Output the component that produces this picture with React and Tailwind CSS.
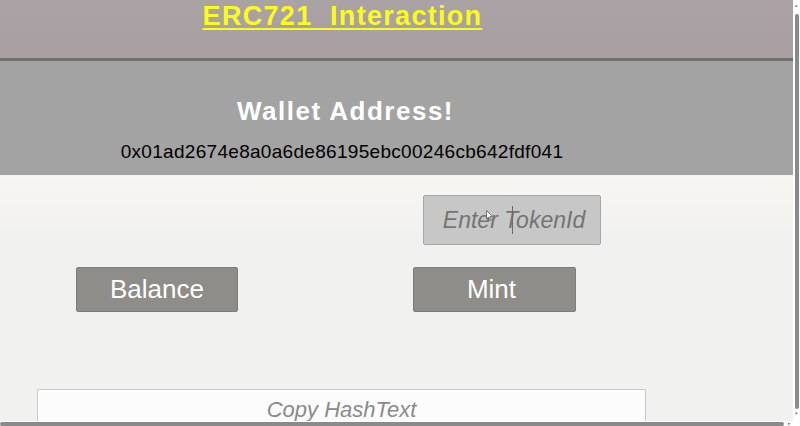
import React from "react";

const App = () => {
  return (
    <div className="relative flex h-[426px] w-[800px] overflow-hidden bg-[#f2f2f0] font-['Liberation_Sans',Arial,sans-serif]">
      <div className="flex w-[793px] flex-col">
        {/* title bar */}
        <header className="h-[58px] shrink-0 bg-gradient-to-b from-[#aaa2a4] to-[#a89fa1]">
          <div className="w-[685px] pt-[1px] text-center leading-[30px]">
            <span className="text-[27px] font-bold tracking-[1.3px] text-[#fbfb1e] underline decoration-[2px] underline-offset-[3px]">
              ERC721&nbsp;&nbsp;Interaction
            </span>
          </div>
        </header>
        <div className="h-[3px] shrink-0 bg-[#726e6e]" />

        {/* wallet */}
        <section className="flex h-[114px] shrink-0 flex-col bg-[#a4a3a3]">
          <div className="w-[691px] pt-[36px] text-center text-[26px] font-bold leading-[28px] tracking-[1.5px] text-white">
            Wallet Address!
          </div>
          <div className="w-[684px] pt-[16px] text-center text-[19px] leading-[22px] tracking-[0.3px] text-black">
            0x01ad2674e8a0a6de86195ebc00246cb642fdf041
          </div>
        </section>

        {/* actions */}
        <main className="flex min-h-0 flex-1 flex-col overflow-hidden bg-gradient-to-b from-[#f7f6f3] to-[#f1f1ef] to-[60px]">
          <div className="flex shrink-0 pl-[423px] pt-[20px]">
            <div className="relative flex h-[50px] w-[178px] items-center justify-center rounded-[2px] border border-[#a9a8a8] bg-[#c8c7c7] pl-[4px]">
              <span className="text-[23px] italic text-[#757474]">Enter TokenId</span>
              <span className="absolute left-[88px] top-[10px] h-[28px] w-px bg-[#6a6a6a]" />
              <svg className="absolute left-[62px] top-[14px]" width="7" height="11" viewBox="0 0 7 11">
                <path d="M0.5 0.5 L0.5 9 L2.5 7 L4 10.5 L5.3 10 L3.8 6.6 L6.5 6.6 Z" fill="#ffffff" stroke="#555" strokeWidth="0.8" />
              </svg>
            </div>
          </div>
          <div className="flex shrink-0 gap-[175px] pl-[76px] pt-[22px]">
            <button className="h-[45px] w-[162px] rounded-[2px] border border-[#7d7c79] bg-[#8e8d89] text-[26px] text-white">
              Balance
            </button>
            <button className="h-[45px] w-[163px] rounded-[2px] border border-[#7d7c79] bg-[#8e8d89] pr-[6px] text-[26px] text-white">
              Mint
            </button>
          </div>
          <div className="shrink-0 pl-[37px] pt-[77px]">
            <div className="flex h-[40px] w-[609px] justify-center rounded-t-[2px] border border-b-0 border-[#c9c9c9] bg-[#fcfcfd] pt-[8px]">
              <span className="text-[22px] italic leading-[24px] text-[#8a8a8a]">Copy HashText</span>
            </div>
          </div>
        </main>

        {/* horizontal scrollbar */}
        <div className="flex h-[5px] shrink-0 items-center bg-white">
          <div className="h-[4px] w-[784px] rounded-full bg-[#8a8a8a]" />
          <span className="ml-[4px] text-[5px] leading-none text-[#777]">▸</span>
        </div>
      </div>

      {/* vertical scrollbar */}
      <div className="flex w-[7px] flex-col items-center bg-white">
        <span className="text-[5px] leading-[10px] text-[#777]">▴</span>
        <div className="mt-[4px] h-[395px] w-[4px] rounded-full bg-[#8a8a8a]" />
        <span className="text-[5px] leading-[8px] text-[#777]">▾</span>
      </div>
    </div>
  );
};

export default App;
